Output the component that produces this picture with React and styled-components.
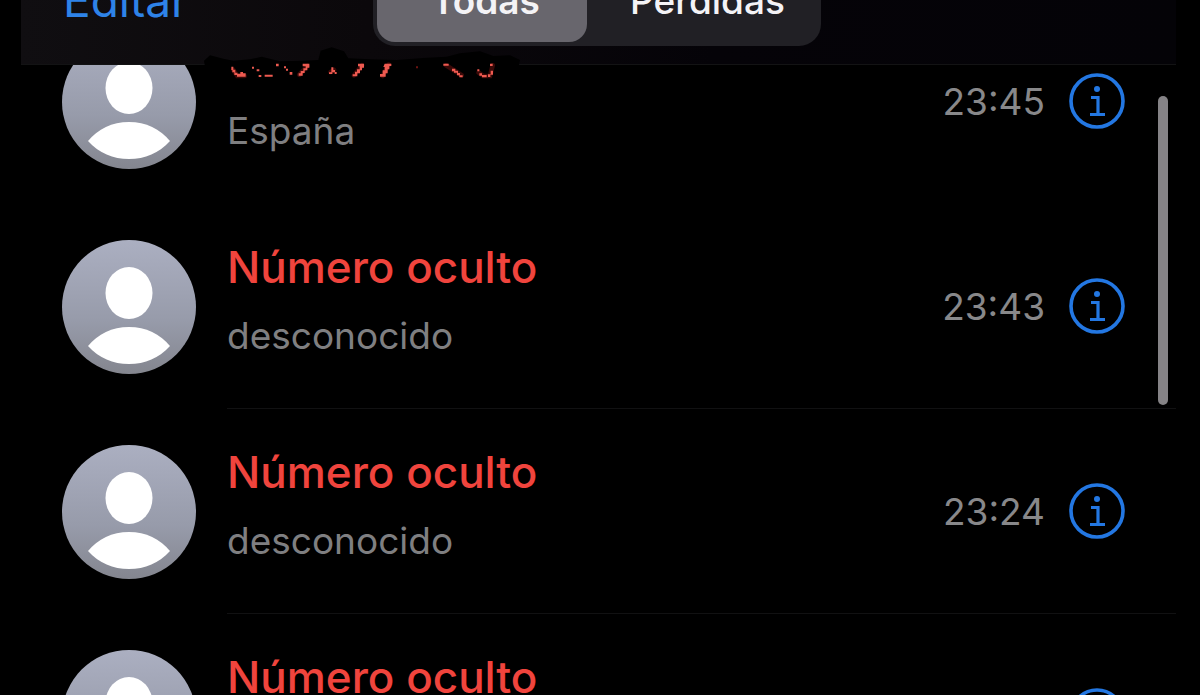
import React from "react";
import styled, { createGlobalStyle } from "styled-components";

const GlobalStyle = createGlobalStyle`
  * { box-sizing: border-box; }
  body {
    margin: 0;
    background: #000;
    font-family: Inter, Roboto, "Liberation Sans", sans-serif;
  }
  button { font: inherit; border: 0; padding: 0; background: none; cursor: pointer; }
`;

const Screen = styled.div`
  position: relative;
  display: flex;
  flex-direction: column;
  height: 100vh;
  overflow: hidden;
  padding: 0 24px 0 21px;
  background: #000;
`;

const Header = styled.header`
  position: relative;
  z-index: 1;
  flex: none;
  display: grid;
  grid-template-columns: 1fr 448px 1fr;
  grid-template-rows: 100%;
  align-items: end;
  height: 65px;
  padding: 0 4px 18px 0;
  background: linear-gradient(90deg, #100e11 0%, #0b080b 30%, #050308 60%, #040307 100%);
  border-bottom: 1px solid #131314;
`;

const EditButton = styled.button`
  justify-self: start;
  margin-left: 42px;
  padding-bottom: 20px;
  font-size: 46px;
  line-height: 52px;
  color: #2e83e8;
`;

const Segments = styled.div`
  display: grid;
  grid-template-columns: 210px 1fr;
  height: 88px;
  padding: 4px;
  border-radius: 22px;
  background: #212025;
`;

const Segment = styled.button`
  padding: 0 0 2px ${(p) => (p.$active ? "8px" : "12px")};
  border-radius: 18px;
  background: ${(p) => (p.$active ? "#68666d" : "transparent")};
  color: #f4f3f6;
  font-size: 37px;
  font-weight: ${(p) => (p.$active ? 600 : 500)};
  line-height: 48px;
`;

const Redaction = styled.svg`
  position: absolute;
  left: 179px;
  top: 44px;
  width: 330px;
  height: 36px;
`;

const ListViewport = styled.main`
  flex: 1;
  min-height: 0;
  overflow: hidden;
`;

const CallList = styled.ul`
  list-style: none;
  margin: -66px 0 0;
  padding: 0;
`;

const CallRow = styled.li`
  display: flex;
  align-items: center;
  gap: 31px;
  padding-left: 41px;
`;

const AvatarArt = styled.svg`
  flex: none;
  width: 134px;
  height: 134px;
`;

const CallBody = styled.div`
  flex: 1;
  display: flex;
  align-items: center;
  gap: 24px;
  height: 205px;
  padding-right: 51px;
  border-bottom: 1px solid ${(p) => (p.$divider ? "#111112" : "transparent")};
`;

const CallText = styled.div`
  flex: 1;
  display: flex;
  flex-direction: column;
  gap: 17px;
  padding-bottom: 9px;
`;

const CallerName = styled.div`
  height: 52px;
  color: #f0443d;
  font-size: 44px;
  font-weight: 500;
  line-height: 52px;
`;

const CallerPlace = styled.div`
  color: #7f7f81;
  font-size: 37px;
  line-height: 52px;
`;

const CallTime = styled.time`
  padding-top: 2px;
  color: #88888a;
  font-size: 37px;
  line-height: 52px;
`;

const InfoButton = styled.button`
  display: block;
  width: 56px;
  height: 56px;
  svg { display: block; }
`;

const ScrollThumb = styled.div`
  position: absolute;
  z-index: 2;
  top: 96px;
  right: 32px;
  width: 10px;
  height: 309px;
  border-radius: 5px;
  background: #858386;
`;

function Avatar({ id }) {
  return (
    <AvatarArt viewBox="0 0 134 134" aria-hidden="true">
      <defs>
        <linearGradient id={id} x1="0" y1="0" x2="0" y2="1">
          <stop offset="0" stopColor="#abafc1" />
          <stop offset="0.6" stopColor="#979baa" />
          <stop offset="1" stopColor="#84868f" />
        </linearGradient>
      </defs>
      <circle cx="67" cy="67" r="67" fill={`url(#${id})`} />
      <ellipse cx="67" cy="53" rx="23.5" ry="26" fill="#fff" />
      <path d="M26 106C36 94 50 87 67 87S98 94 108 106C97 118 83 124 67 124S37 118 26 106Z" fill="#fff" />
    </AvatarArt>
  );
}

function InfoIcon() {
  return (
    <svg width="56" height="56" viewBox="0 0 56 56" fill="none" stroke="#2377e2" aria-hidden="true">
      <circle cx="28" cy="28" r="26" strokeWidth="3.6" />
      <circle cx="28" cy="16" r="3" fill="#2377e2" stroke="none" />
      <path d="M22 24.5H29V41M21 41.5H36" strokeWidth="3.2" />
    </svg>
  );
}

const calls = [
  { place: "España", time: "23:45", divider: false },
  { name: "Número oculto", place: "desconocido", time: "23:43", divider: true },
  { name: "Número oculto", place: "desconocido", time: "23:24", divider: true },
  { name: "Número oculto", place: "desconocido", time: "23:24", divider: true },
];

export default function App() {
  return (
    <>
      <GlobalStyle />
      <Screen>
        <Header>
          <EditButton type="button">Editar</EditButton>
          <Segments>
            <Segment type="button" $active>Todas</Segment>
            <Segment type="button">Perdidas</Segment>
          </Segments>
          <Redaction viewBox="30 12 990 108" aria-hidden="true">
            <path
              d="M42 62L60 46L100 56L130 62L180 58L215 50L270 64L340 62L385 60L392 32L425 22L462 34L475 55L540 58L620 60L700 54L770 50L810 40L870 34L910 48L960 46L990 60L985 84L930 116L100 116L70 84L44 74Z"
              fill="#000"
            />
            <g fill="none" stroke="#a31b16" strokeWidth="14" opacity="0.35" strokeLinecap="round">
              <path d="M130 90L142 108H164M328 104L352 78M422 96L432 90M492 106L516 76M578 108L596 74M768 76L815 106M866 98L880 108H900L908 76" />
            </g>
            <g fill="#ee5a50">
              <path d="M124 80h6v9h6v9h6v3h9v-5h8v4h8v10h-26v-5h-8v-8h-6v-7h-3z" />
              <path d="M186 80h6v6h-6zM200 88h8v6h-8zM206 105h8v6h-8zM224 104h24v6h-24zM258 71h8v8h-8zM282 79h6v6h-6zM288 86h6v6h-6zM299 96h8v8h-8z" />
              <path d="M338 71h20v12h-6v8h-8v8h-6v8h-12v-7h6v-7h8v-8h7v-6h-9z" />
              <path d="M424 82h6v8h5v6h5v6h-6v-5h-7v5h-10v-5h7z" />
              <path d="M504 71h18v12h-6v8h-6v9h-8v9h-14v-6h7v-8h6v-7h8v-9h-5z" />
              <path d="M584 71h20v7h-6v10h-5v12h-6v10h-17v-8h8v-11h6v-10h-4z" />
              <path d="M678 79h6v6h-6z" fill="#6c1512" />
              <path d="M760 71h16v6h-16zM786 86h10v6h8v7h6v7h8v6h-10v-6h-7v-8h-9v-4h-6z" />
              <path d="M862 88h6v6h-6zM868 100h8v5h14v7h-14v-5h-8zM900 71h8v7h-8zM902 92h7v12h-8v7h-7v-8h8z" />
            </g>
          </Redaction>
        </Header>
        <ListViewport>
          <CallList>
            {calls.map((call, i) => (
              <CallRow key={i}>
                <Avatar id={`avatar-${i}`} />
                <CallBody $divider={call.divider}>
                  <CallText>
                    <CallerName>{call.name}</CallerName>
                    <CallerPlace>{call.place}</CallerPlace>
                  </CallText>
                  <CallTime>{call.time}</CallTime>
                  <InfoButton type="button" aria-label="Información">
                    <InfoIcon />
                  </InfoButton>
                </CallBody>
              </CallRow>
            ))}
          </CallList>
        </ListViewport>
        <ScrollThumb />
      </Screen>
    </>
  );
}
